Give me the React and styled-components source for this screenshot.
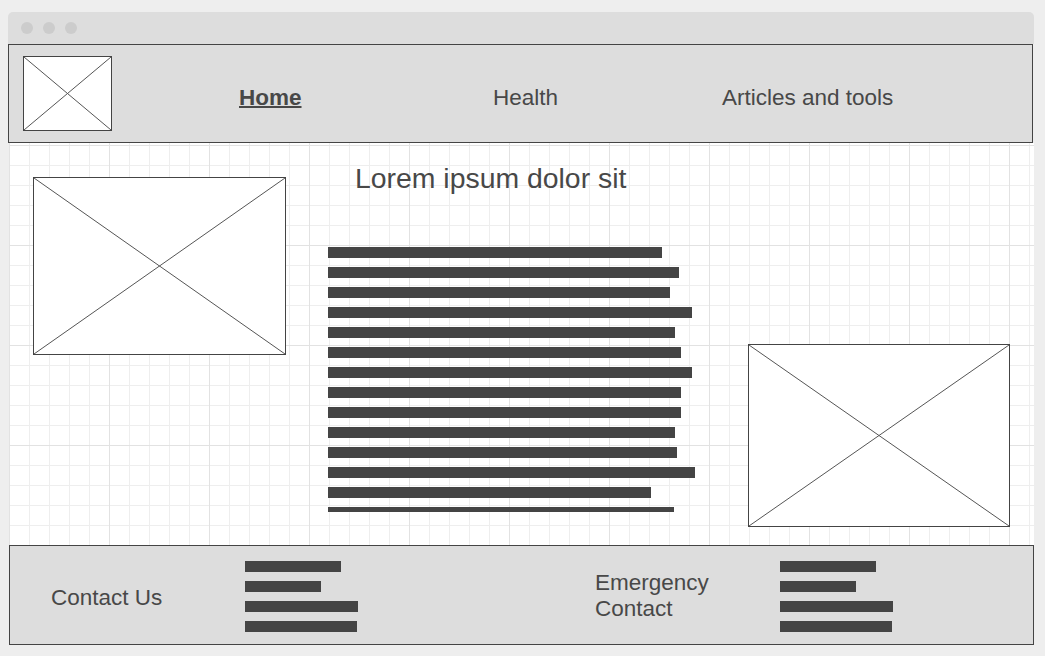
import React from "react";
import styled, { createGlobalStyle } from "styled-components";

const GlobalStyle = createGlobalStyle`
  html, body {
    margin: 0;
    padding: 0;
    background: #eeeeee;
    font-family: "Liberation Sans", Arial, sans-serif;
    color: #484848;
  }
  * { box-sizing: border-box; }
`;

const Window = styled.div`
  margin: 12px 0 0 8px;
  width: 1026px;
`;

const TitleBar = styled.div`
  height: 32px;
  background: #dddddd;
  border-radius: 5px 5px 0 0;
  display: flex;
  align-items: center;
  padding-left: 13px;
  gap: 10px;
`;

const Dot = styled.span`
  width: 12px;
  height: 12px;
  border-radius: 50%;
  background: #cccccc;
`;

const Header = styled.header`
  width: 1025px;
  height: 99px;
  background: #dddddd;
  border: 1px solid #444444;
  padding-left: 14px;
  display: grid;
  grid-template-columns: 216px 254px 229px 1fr;
  align-items: start;
`;

const ImageBox = styled.div`
  width: ${(p) => p.$w}px;
  height: ${(p) => p.$h}px;
  background: #ffffff;
  border: 1px solid #444444;
  flex-shrink: 0;
  svg {
    display: block;
    width: 100%;
    height: 100%;
  }
`;

const LogoSlot = styled.div`
  padding-top: 11px;
`;

const NavItem = styled.a`
  display: block;
  padding-top: 40px;
  font-size: 22.5px;
  line-height: 26px;
  color: #484848;
  font-weight: ${(p) => (p.$active ? 700 : 400)};
  text-decoration: ${(p) => (p.$active ? "underline" : "none")};
  text-decoration-thickness: 2px;
  text-underline-offset: 1px;
  white-space: nowrap;
`;

const Main = styled.main`
  margin-left: 1px;
  width: 1025px;
  height: 402px;
  display: flex;
  align-items: flex-start;
  background-color: #ffffff;
  background-image:
    linear-gradient(to right, #e2e2e2 1px, transparent 1px),
    linear-gradient(to bottom, #e2e2e2 1px, transparent 1px),
    linear-gradient(to right, #eeeeee 1px, transparent 1px),
    linear-gradient(to bottom, #eeeeee 1px, transparent 1px);
  background-size: 100px 100px, 100px 100px, 20px 20px, 20px 20px;
  background-position: 0 2px;
`;

const LeftSlot = styled.div`
  margin: 34px 0 0 24px;
`;

const RightSlot = styled.div`
  margin: 201px 24px 0 auto;
`;

const Article = styled.section`
  margin-left: 42px;
  width: 380px;
`;

const Title = styled.h1`
  margin: 19px 0 0 27px;
  font-size: 28.4px;
  line-height: 32px;
  font-weight: 400;
  color: #484848;
  white-space: nowrap;
`;

const TextBlock = styled.div`
  margin-top: 53px;
  height: 265px;
  overflow: hidden;
  display: flex;
  flex-direction: column;
  gap: 9px;
`;

const Bar = styled.div`
  height: 11px;
  flex-shrink: 0;
  background: #444444;
`;

const Footer = styled.footer`
  margin-left: 1px;
  width: 1025px;
  height: 100px;
  background: #dddddd;
  border: 1px solid #444444;
  display: grid;
  grid-template-columns: 235px 350px 185px 1fr;
  align-items: start;
`;

const FooterLabel = styled.div`
  padding-top: ${(p) => p.$top}px;
  padding-left: ${(p) => p.$left || 0}px;
  font-size: 22.5px;
  line-height: 26px;
  color: #484848;
`;

const BarStack = styled.div`
  padding-top: 15px;
  display: flex;
  flex-direction: column;
  gap: 9px;
`;

const Placeholder = ({ w, h }) => (
  <ImageBox $w={w} $h={h}>
    <svg viewBox="0 0 100 100" preserveAspectRatio="none">
      <line x1="0" y1="0" x2="100" y2="100" stroke="#555" strokeWidth="1" vectorEffect="non-scaling-stroke" />
      <line x1="100" y1="0" x2="0" y2="100" stroke="#555" strokeWidth="1" vectorEffect="non-scaling-stroke" />
    </svg>
  </ImageBox>
);

const textBars = [334, 351, 342, 364, 347, 353, 364, 353, 353, 347, 349, 367, 323, 346];
const footerBars = [96, 76, 113, 112];

export default function App() {
  return (
    <>
      <GlobalStyle />
      <Window>
        <TitleBar>
          <Dot />
          <Dot />
          <Dot />
        </TitleBar>
        <Header>
          <LogoSlot>
            <Placeholder w={89} h={75} />
          </LogoSlot>
          <NavItem $active>Home</NavItem>
          <NavItem>Health</NavItem>
          <NavItem>Articles and tools</NavItem>
        </Header>
        <Main>
          <LeftSlot>
            <Placeholder w={253} h={178} />
          </LeftSlot>
          <Article>
            <Title>Lorem ipsum dolor sit</Title>
            <TextBlock>
              {textBars.map((w, i) => (
                <Bar key={i} style={{ width: w }} />
              ))}
            </TextBlock>
          </Article>
          <RightSlot>
            <Placeholder w={262} h={183} />
          </RightSlot>
        </Main>
        <Footer>
          <FooterLabel $top={39} $left={41}>Contact Us</FooterLabel>
          <BarStack>
            {footerBars.map((w, i) => (
              <Bar key={i} style={{ width: w }} />
            ))}
          </BarStack>
          <FooterLabel $top={24}>
            Emergency
            <br />
            Contact
          </FooterLabel>
          <BarStack>
            {footerBars.map((w, i) => (
              <Bar key={i} style={{ width: w }} />
            ))}
          </BarStack>
        </Footer>
      </Window>
    </>
  );
}
